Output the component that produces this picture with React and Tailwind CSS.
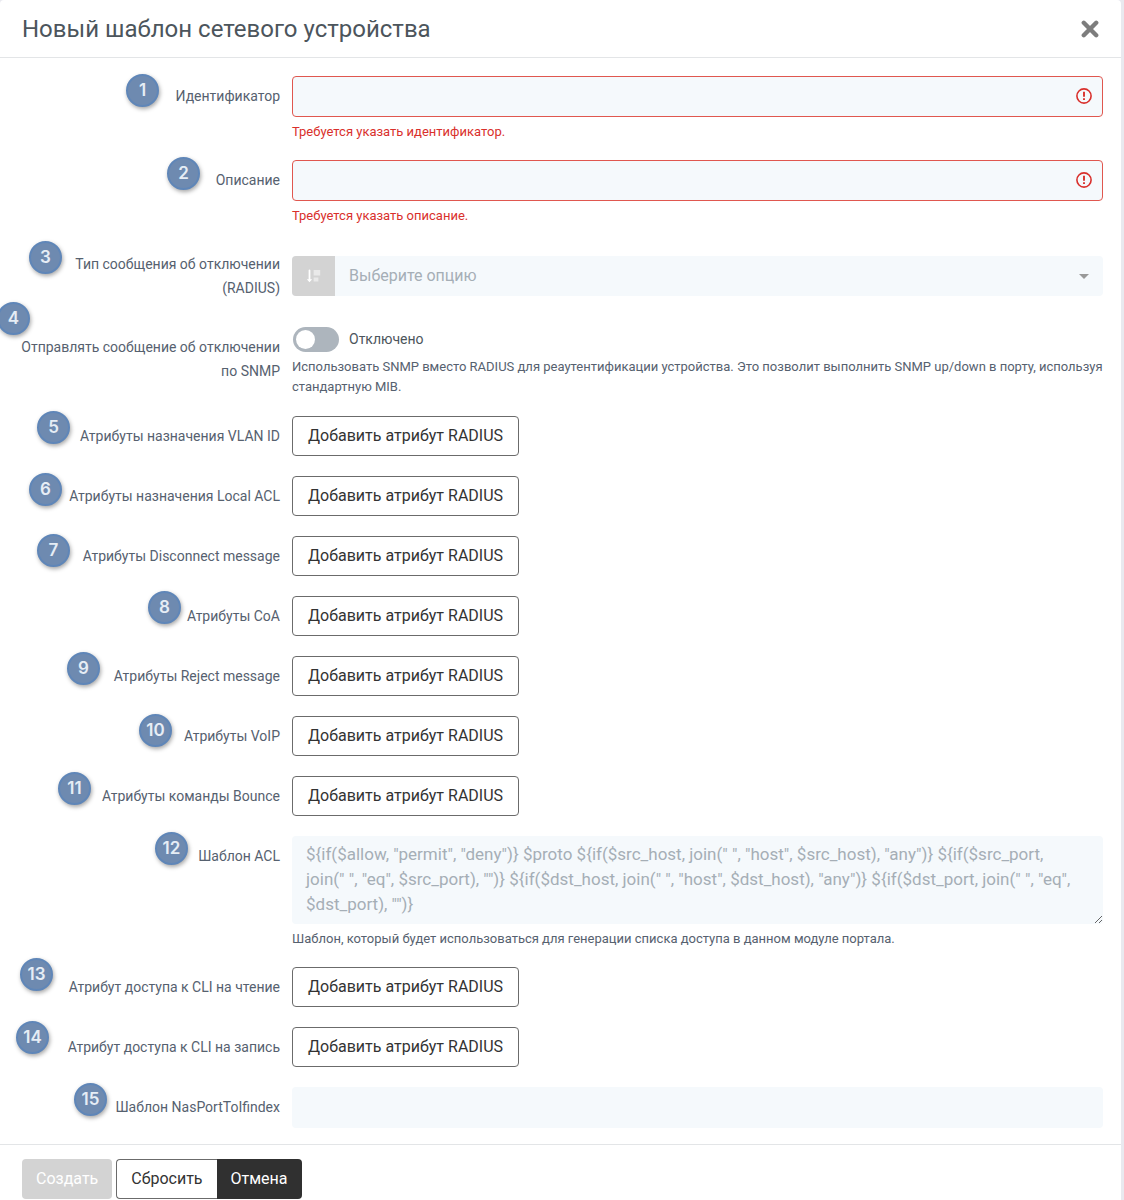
import React, { useState } from 'react';

const ACL_PLACEHOLDER = [
  '${if($allow, "permit", "deny")} $proto ${if($src_host, join(" ", "host", $src_host), "any")} ${if($src_port,',
  'join(" ", "eq", $src_port), "")} ${if($dst_host, join(" ", "host", $dst_host), "any")} ${if($dst_port, join(" ", "eq",',
  '$dst_port), "")}',
].join('\n');

const radiusRows = [
  { num: 5, id: 'vlan', label: 'Атрибуты назначения VLAN ID', badge: 'left-[37px] top-[-5px]' },
  { num: 6, id: 'local-acl', label: 'Атрибуты назначения Local ACL', badge: 'left-[29px] top-[-3px]' },
  { num: 7, id: 'disconnect', label: 'Атрибуты Disconnect message', badge: 'left-[37px] top-[-2px]' },
  { num: 8, id: 'coa', label: 'Атрибуты CoA', badge: 'left-[148px] top-[-5px]' },
  { num: 9, id: 'reject', label: 'Атрибуты Reject message', badge: 'left-[67px] top-[-4px]' },
  { num: 10, id: 'voip', label: 'Атрибуты VoIP', badge: 'left-[139px] top-[-2px]' },
  { num: 11, id: 'bounce', label: 'Атрибуты команды Bounce', badge: 'left-[58px] top-[-4px]' },
];

const cliRows = [
  { num: 13, id: 'cli-read', label: 'Атрибут доступа к CLI на чтение', badge: 'left-[20px] top-[-9px]' },
  { num: 14, id: 'cli-write', label: 'Атрибут доступа к CLI на запись', badge: 'left-[16px] top-[-6px]' },
];

const Badge = ({ num, place }) => (
  <span
    className={`absolute ${place} flex h-[33px] w-[33px] items-center justify-center rounded-full border-2 border-[#5f86b8] bg-[#6e8ab0] font-[Inter,sans-serif] text-[17px] font-semibold leading-none text-[#e6edf5] shadow-[1px_2px_4px_rgba(0,0,0,0.35)]`}
  >
    {num}
  </span>
);

const Row = ({ num, badge, id, label, children }) => (
  <div className="relative grid min-h-[41px] grid-cols-[280px_minmax(0,1fr)] gap-3">
    <label htmlFor={id} className="py-2 pl-5 text-right text-[14px] leading-6 text-[#56616f]">
      {label}
    </label>
    <div>{children}</div>
    <Badge num={num} place={badge} />
  </div>
);

const RequiredInput = ({ id, error }) => (
  <>
    <div className="relative">
      <input
        id={id}
        type="text"
        aria-invalid="true"
        aria-describedby={`${id}-error`}
        className="block h-[41px] w-full rounded border border-[#e0574f] bg-[#f5f9fc] pl-3.5 pr-10 text-[16px] text-[#333] outline-none"
      />
      <svg className="absolute right-[11px] top-3 h-4 w-4" viewBox="0 0 16 16" fill="none" stroke="#d9302c" strokeWidth="1.6">
        <circle cx="8" cy="8" r="7.1" />
        <path d="M8 3.8v5M8 10.3v1.7" strokeWidth="1.9" />
      </svg>
    </div>
    <p id={`${id}-error`} className="mt-[5px] text-[13px] leading-[19px] text-[#d9302c]">{error}</p>
  </>
);

const RadiusButton = ({ id }) => (
  <button
    id={id}
    type="button"
    className="h-10 rounded border border-[#6b6b6b] bg-white px-[15px] text-[16px] leading-6 text-[#333]"
  >
    Добавить атрибут RADIUS
  </button>
);

const App = () => {
  const [snmp, setSnmp] = useState(false);

  return (
    <div className="min-h-screen bg-[#e9e9ef] pr-[3px] font-[Roboto,'Noto_Sans',sans-serif]">
      <form className="min-h-screen overflow-hidden rounded-t bg-white" onSubmit={(e) => e.preventDefault()}>
        <header className="flex h-[58px] items-center justify-between border-b border-[#e3e5e7] pl-[22px] pr-[22px]">
          <h1 className="text-[24px] leading-8 text-[#4c555c]">Новый шаблон сетевого устройства</h1>
          <button type="button" aria-label="Закрыть">
            <svg className="h-[18px] w-[18px]" viewBox="0 0 18 18" stroke="#7d7d7d" strokeWidth="4.4" strokeLinecap="round">
              <path d="M2.8 2.8l12.4 12.4M15.2 2.8L2.8 15.2" />
            </svg>
          </button>
        </header>

        <div className="flex flex-col gap-[19px] pb-4 pr-[18px] pt-[18px]">
          <Row num={1} badge="left-[126px] top-[-2px]" id="ident" label="Идентификатор">
            <RequiredInput id="ident" error="Требуется указать идентификатор." />
          </Row>

          <Row num={2} badge="left-[167px] top-[-3px]" id="descr" label="Описание">
            <RequiredInput id="descr" error="Требуется указать описание." />
          </Row>

          <Row num={3} badge="left-[29px] top-[-3px]" id="msg-type" label="Тип сообщения об отключении (RADIUS)">
            <div className="relative mt-3 flex h-10 overflow-hidden rounded bg-[#f5f9fc]">
              <span className="flex w-[43px] items-center justify-center bg-[#d3d3d3]">
                <svg className="h-4 w-4" viewBox="0 0 16 16" fill="#fff">
                  <path d="M2.6 2.4a.9.9 0 0 1 1.8 0v8.8h1.8L3.5 14.2.8 11.2h1.8z" />
                  <path d="M7.6 2h6.6v5.6H7.6zM7.6 9.4h4.8v4H7.6z" opacity="0.5" />
                </svg>
              </span>
              <select id="msg-type" defaultValue="" className="flex-1 appearance-none bg-transparent pl-3.5 pr-10 text-[16px] text-[#a5aeb6] outline-none">
                <option value="">Выберите опцию</option>
              </select>
              <svg className="pointer-events-none absolute right-3.5 top-[18px] h-[5px] w-2.5" viewBox="0 0 10 5" fill="#999">
                <path d="M0 0h10L5 5z" />
              </svg>
            </div>
          </Row>

          <Row num={4} badge="left-[-3px] top-[-25px]" id="snmp" label={<>Отправлять сообщение об отключении<br />по SNMP</>}>
            <div className="flex h-[25px] items-center gap-2.5">
              <input
                id="snmp"
                type="checkbox"
                role="switch"
                checked={snmp}
                onChange={(e) => setSnmp(e.target.checked)}
                className="ml-px h-[25px] w-[46px] appearance-none rounded-full bg-[#adb5bd] p-[3px] before:block before:h-[19px] before:w-[19px] before:rounded-full before:bg-white checked:bg-[#333] checked:before:translate-x-[21px]"
              />
              <span className="text-[14px] text-[#4c555c]">{snmp ? 'Включено' : 'Отключено'}</span>
            </div>
            <p className="mt-[5px] text-[13px] leading-5 text-[#56616f]">
              Использовать SNMP вместо RADIUS для реаутентификации устройства. Это позволит выполнить SNMP up/down в порту, используя стандартную MIB.
            </p>
          </Row>

          {radiusRows.map((row) => (
            <Row key={row.id} {...row}>
              <RadiusButton id={row.id} />
            </Row>
          ))}

          <Row num={12} badge="left-[155px] top-[-4px]" id="acl" label="Шаблон ACL">
            <textarea
              id="acl"
              placeholder={ACL_PLACEHOLDER}
              className="block h-[88px] w-full resize-y rounded bg-[#f5f9fc] px-3.5 py-1.5 text-[17px] leading-[25px] text-[#333] outline-none placeholder:text-[#a5aeb6]"
            />
            <p className="mt-[5px] text-[13px] leading-[19px] text-[#56616f]">
              Шаблон, который будет использоваться для генерации списка доступа в данном модуле портала.
            </p>
          </Row>

          {cliRows.map((row) => (
            <Row key={row.id} {...row}>
              <RadiusButton id={row.id} />
            </Row>
          ))}

          <Row num={15} badge="left-[74px] top-[-4px]" id="ifindex" label="Шаблон NasPortToIfindex">
            <input id="ifindex" type="text" className="block h-[41px] w-full rounded bg-[#f5f9fc] px-3.5 text-[16px] text-[#333] outline-none" />
          </Row>
        </div>

        <footer className="flex gap-1 border-t border-[#e3e5e7] px-[22px] pt-3.5 text-[16px] leading-6">
          <button type="submit" disabled className="h-10 rounded bg-[#d3d3d3] px-3.5 text-white">Создать</button>
          <div className="flex">
            <button type="reset" className="h-10 rounded-l border border-r-0 border-[#6b6b6b] bg-white px-3.5 text-[#333]">Сбросить</button>
            <button type="button" className="h-10 rounded-r bg-[#303030] px-3.5 text-white">Отмена</button>
          </div>
        </footer>
      </form>
    </div>
  );
};

export default App;
